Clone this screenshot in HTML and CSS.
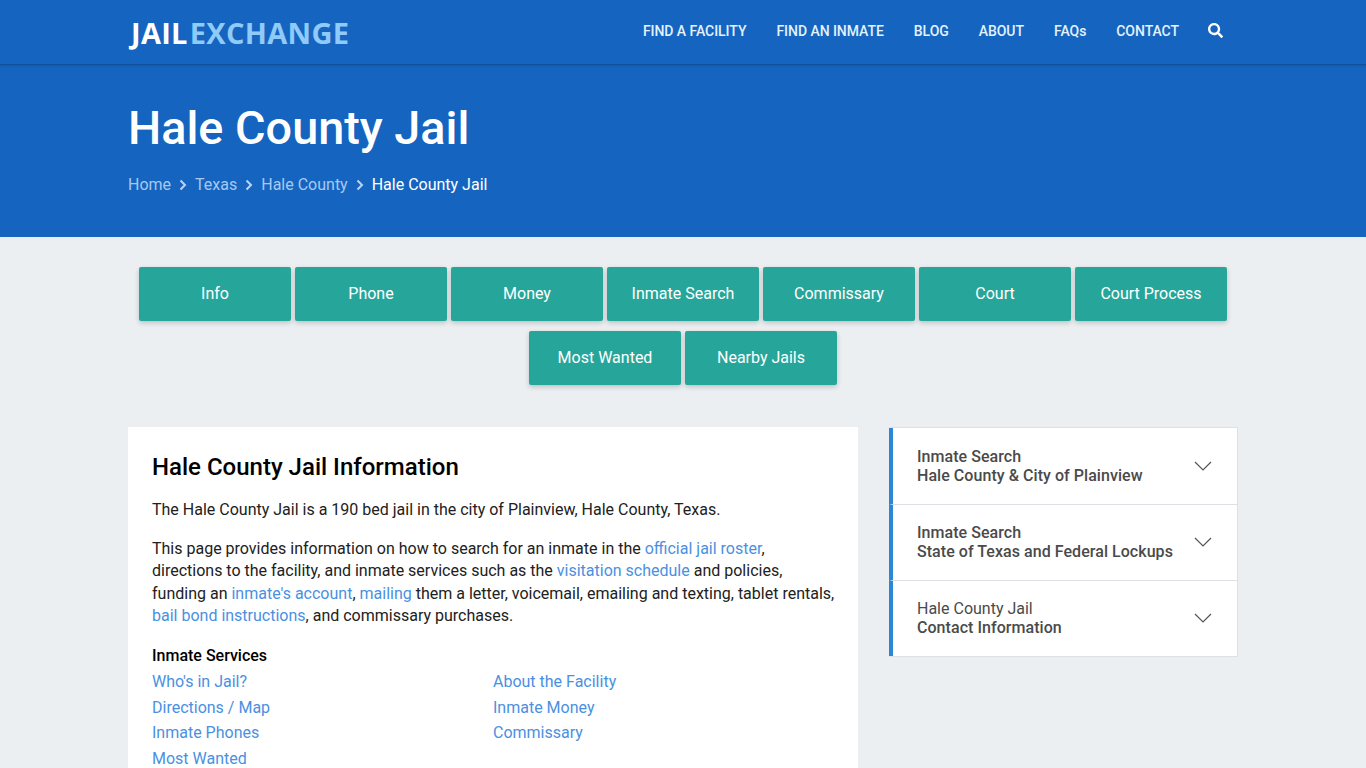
FILE: index.html

```html
<!DOCTYPE html>
<html lang="en">
<head>
  <meta charset="UTF-8">
  <title>Hale County Jail</title>
  <link rel="stylesheet" href="styles.css">
</head>
<body>
  <div class="topbar">
    <div class="wrap topbar-inner">
      <a class="logo" href="#"><span class="logo-jail">JAIL</span><span class="logo-exchange">EXCHANGE</span></a>
      <div class="nav">
        <a href="#">FIND A FACILITY</a>
        <a href="#">FIND AN INMATE</a>
        <a href="#">BLOG</a>
        <a href="#">ABOUT</a>
        <a href="#">FAQs</a>
        <a href="#">CONTACT</a>
        <a href="#" class="nav-search">
          <svg width="15" height="15" viewBox="0 0 512 512"><path fill="#fff" d="M505 442.700L405.300 343c-4.500-4.500-10.600-7-17-7H372c27.600-35.300 44-79.700 44-128C416 93.100 322.900 0 208 0S0 93.100 0 208s93.100 208 208 208c48.300 0 92.700-16.400 128-44v16.300c0 6.400 2.500 12.500 7 17l99.700 99.700c9.400 9.400 24.600 9.400 33.900 0l28.300-28.300c9.400-9.400 9.400-24.600.1-34zM208 336c-70.700 0-128-57.200-128-128 0-70.700 57.200-128 128-128 70.700 0 128 57.200 128 128 0 70.700-57.200 128-128 128z"/></svg>
        </a>
      </div>
    </div>
  </div>

  <div class="hero">
    <div class="wrap">
      <h1>Hale County Jail</h1>
      <div class="crumbs">
        <a href="#">Home</a>
        <svg class="crumb-sep" width="8" height="12" viewBox="0 0 8 12"><path d="M1.500 1.500L6 6l-4.500 4.500" fill="none" stroke="#bbd3f2" stroke-width="2"/></svg>
        <a href="#">Texas</a>
        <svg class="crumb-sep" width="8" height="12" viewBox="0 0 8 12"><path d="M1.500 1.500L6 6l-4.500 4.500" fill="none" stroke="#bbd3f2" stroke-width="2"/></svg>
        <a href="#">Hale County</a>
        <svg class="crumb-sep" width="8" height="12" viewBox="0 0 8 12"><path d="M1.500 1.500L6 6l-4.500 4.500" fill="none" stroke="#bbd3f2" stroke-width="2"/></svg>
        <span class="crumb-current">Hale County Jail</span>
      </div>
    </div>
  </div>

  <div class="wrap">
    <div class="buttons">
      <a class="btn" href="#">Info</a>
      <a class="btn" href="#">Phone</a>
      <a class="btn" href="#">Money</a>
      <a class="btn" href="#">Inmate Search</a>
      <a class="btn" href="#">Commissary</a>
      <a class="btn" href="#">Court</a>
      <a class="btn" href="#">Court Process</a>
      <a class="btn" href="#">Most Wanted</a>
      <a class="btn" href="#">Nearby Jails</a>
    </div>

    <div class="columns">
      <div class="card">
        <h2>Hale County Jail Information</h2>
        <p>The Hale County Jail is a 190 bed jail in the city of Plainview, Hale County, Texas.</p>
        <p>This page provides information on how to search for an inmate in the <a href="#">official jail roster</a>, directions to the facility, and inmate services such as the <a href="#">visitation schedule</a> and policies, funding an <a href="#">inmate's account</a>, <a href="#">mailing</a> them a letter, voicemail, emailing and texting, tablet rentals, <a href="#">bail bond instructions</a>, and commissary purchases.</p>
        <div class="services-title">Inmate Services</div>
        <div class="services">
          <a href="#">Who's in Jail?</a>
          <a href="#">About the Facility</a>
          <a href="#">Directions / Map</a>
          <a href="#">Inmate Money</a>
          <a href="#">Inmate Phones</a>
          <a href="#">Commissary</a>
          <a href="#">Most Wanted</a>
        </div>
      </div>

      <div class="side">
        <div class="side-item">
          <div class="side-text"><b>Inmate Search</b><b>Hale County &amp; City of Plainview</b></div>
          <svg class="side-arrow" width="18" height="10" viewBox="0 0 18 10"><path d="M1 1l8 8 8-8" fill="none" stroke="#555" stroke-width="1.200"/></svg>
        </div>
        <div class="side-item">
          <div class="side-text"><b>Inmate Search</b><b>State of Texas and Federal Lockups</b></div>
          <svg class="side-arrow" width="18" height="10" viewBox="0 0 18 10"><path d="M1 1l8 8 8-8" fill="none" stroke="#555" stroke-width="1.200"/></svg>
        </div>
        <div class="side-item">
          <div class="side-text"><span>Hale County Jail</span><b>Contact Information</b></div>
          <svg class="side-arrow" width="18" height="10" viewBox="0 0 18 10"><path d="M1 1l8 8 8-8" fill="none" stroke="#555" stroke-width="1.200"/></svg>
        </div>
      </div>
    </div>
  </div>
</body>
</html>
```

FILE: styles.css

```css
html, body {
  margin: 0;
  padding: 0;
  height: 768px;
  overflow: hidden;
}

body {
  font-family: Roboto, "Liberation Sans", sans-serif;
  font-size: 16px;
  color: #212121;
  background-color: #eceff1;
}

a {
  text-decoration: none;
}

.wrap {
  width: 1110px;
  margin: 0 auto;
}

.topbar {
  background-color: #1565c0;
  height: 64px;
  border-bottom: 1px solid #0f4f9c;
  box-shadow: 0 1px 2px rgba(0, 0, 0, 0.15);
  position: relative;
}

.topbar-inner {
  display: flex;
  justify-content: space-between;
  align-items: center;
  height: 64px;
}

.logo {
  font-family: "Open Sans", sans-serif;
  font-size: 29px;
  font-weight: 700;
  letter-spacing: 0.3px;
  padding-left: 3px;
}

.logo-jail {
  color: #fff;
}

.logo-exchange {
  color: #90caf9;
  margin-left: 2px;
}

.nav {
  display: flex;
  align-items: center;
  gap: 30px;
  margin-right: 15px;
  margin-top: -3px;
}

.nav a {
  color: #e3f2fd;
  font-size: 14px;
  font-weight: 500;
  letter-spacing: -0.05px;
}

.nav .nav-search {
  display: flex;
  margin-left: -1px;
}

.hero {
  background-color: #1565c0;
  height: 172px;
}

.hero h1 {
  margin: 0;
  padding-top: 34px;
  font-size: 46.800px;
  line-height: 58px;
  font-weight: 500;
  color: #fff;
}

.crumbs {
  display: flex;
  align-items: center;
  gap: 8px;
  margin-top: 16px;
  line-height: 24px;
}

.crumbs a {
  color: #a8c8f0;
}

.crumb-current {
  color: #fff;
}

.buttons {
  display: flex;
  flex-wrap: wrap;
  justify-content: center;
  gap: 10px 4px;
  padding-top: 30px;
}

.btn {
  display: flex;
  align-items: center;
  justify-content: center;
  width: 152px;
  height: 54px;
  padding-bottom: 2px;
  box-sizing: border-box;
  border-radius: 2px;
  background-color: #26a69a;
  color: #fff;
  box-shadow: 0 2px 5px rgba(0, 0, 0, 0.2);
}

.columns {
  display: flex;
  justify-content: space-between;
  align-items: flex-start;
  margin-top: 42px;
}

.card {
  width: 730px;
  box-sizing: border-box;
  padding: 24px 22px 40px 24px;
  background-color: #fff;
}

.card h2 {
  margin: 0 0 16px;
  font-size: 24px;
  line-height: 32px;
  font-weight: 500;
  color: #000;
}

.card p {
  margin: 0 0 16px;
  line-height: 22.500px;
}

.card a {
  color: #4a90e2;
}

.services-title {
  font-weight: 500;
  line-height: 24px;
  margin-top: 16px;
  color: #000;
}

.services {
  display: grid;
  grid-template-columns: 341px 1fr;
  grid-auto-rows: 25.600px;
  line-height: 25.600px;
  padding-top: 1.800px;
}

.side {
  width: 349px;
  box-sizing: border-box;
  background-color: #fff;
  border: 1px solid #dde1e5;
  border-left: none;
}

.side-item {
  display: flex;
  align-items: center;
  justify-content: space-between;
  height: 76px;
  box-sizing: border-box;
  padding: 0 25px 2px 24px;
  border-left: 4px solid #2b88d8;
  border-bottom: 1px solid #dde1e5;
  color: #4a4a4a;
}

.side-item:first-child {
  height: 77px;
  padding-bottom: 0;
}

.side-item:last-child {
  height: 75px;
  border-bottom: none;
}

.side-text {
  display: flex;
  flex-direction: column;
  line-height: 19px;
}

.side-text b {
  font-weight: 500;
  letter-spacing: 0.05px;
}
```
